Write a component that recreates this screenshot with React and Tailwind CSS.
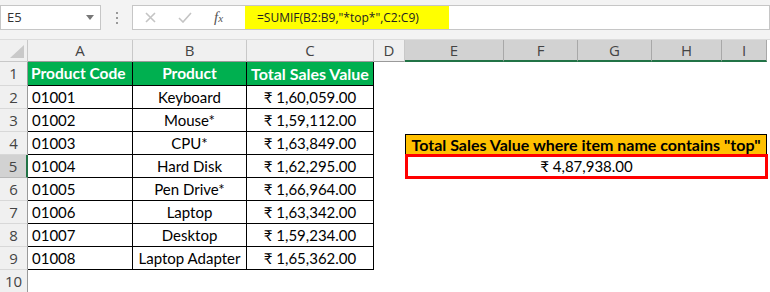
import React from "react";

const cols = [
  { k: "A", w: "w-[105px]" },
  { k: "B", w: "w-[114px]" },
  { k: "C", w: "w-[127px]" },
  { k: "D", w: "w-[31px]" },
  { k: "E", w: "w-[99px]", sel: true },
  { k: "F", w: "w-[74px]", sel: true },
  { k: "G", w: "w-[74px]", sel: true },
  { k: "H", w: "w-[70px]", sel: true },
  { k: "I", w: "w-[45px]", sel: true },
];

const data = [
  ["01001", "Keyboard", "₹ 1,60,059.00"],
  ["01002", "Mouse*", "₹ 1,59,112.00"],
  ["01003", "CPU*", "₹ 1,63,849.00"],
  ["01004", "Hard Disk", "₹ 1,62,295.00"],
  ["01005", "Pen Drive*", "₹ 1,66,964.00"],
  ["01006", "Laptop", "₹ 1,63,342.00"],
  ["01007", "Desktop", "₹ 1,59,234.00"],
  ["01008", "Laptop Adapter", "₹ 1,65,362.00"],
];

const cellFont = { fontFamily: "Lato, 'Open Sans', sans-serif" };
const uiFont = { fontFamily: "'Open Sans', 'Noto Sans', sans-serif" };

function RowHead({ n, sel, h }) {
  return (
    <div
      className={`w-[28px] shrink-0 ${h} flex items-center justify-center text-[15px] text-[#444] border-b ${
        sel
          ? "bg-[#d2d2d2] border-r-2 border-r-[#217346] border-b-[#b8b8b8]"
          : "bg-[#f0f0f0] border-r border-r-[#9a9a9a] border-b-[#d8d8d8]"
      }`}
      style={uiFont}
    >
      {n}
    </div>
  );
}

export default function App() {
  return (
    <div className="w-[770px] h-[292px] bg-white overflow-hidden relative">
      {/* Formula bar */}
      <div className="h-[40px] bg-[#f3f3f3] flex items-start pt-[5px] border-b border-[#dcdcdc]">
        <div className="w-[101px] h-[25px] bg-white border border-[#c6c6c6] flex items-center justify-between pl-[6px] pr-[6px]" style={uiFont}>
          <span className="text-[13px] text-[#333]">E5</span>
          <svg width="8" height="5" viewBox="0 0 8 5"><path d="M0 0 L8 0 L4 5 Z" fill="#777" /></svg>
        </div>
        <div className="w-[31px] h-[25px] flex flex-col items-center justify-center gap-[3px]">
          <span className="w-[2px] h-[2px] bg-[#999]" />
          <span className="w-[2px] h-[2px] bg-[#999]" />
          <span className="w-[2px] h-[2px] bg-[#999]" />
        </div>
        <div className="flex-1 h-[25px] bg-white border border-[#c6c6c6] flex items-center">
          <div className="w-[112px] flex items-center h-full shrink-0">
            <svg className="ml-[12px]" width="11" height="11" viewBox="0 0 11 11"><path d="M1 1 L10 10 M10 1 L1 10" stroke="#c4c4c4" strokeWidth="1.6" /></svg>
            <svg className="ml-[22px]" width="14" height="11" viewBox="0 0 14 11"><path d="M1 6 L5 10 L13 1" stroke="#c4c4c4" strokeWidth="1.6" fill="none" /></svg>
            <span className="ml-[22px] text-[15px] italic text-[#555]" style={{ fontFamily: "'Liberation Serif', serif" }}>
              f<span className="text-[11px]">x</span>
            </span>
          </div>
          <div className="h-full w-[204px] bg-[#ffff00] flex items-center pl-[12px] text-[12px] text-[#222] shrink-0" style={uiFont}>
            =SUMIF(B2:B9,"*top*",C2:C9)
          </div>
        </div>
      </div>

      {/* Column headers */}
      <div className="flex h-[22px]">
        <div className="w-[28px] shrink-0 bg-[#f0f0f0] border-r border-b border-[#c8c8c8] relative">
          <svg className="absolute right-[3px] bottom-[3px]" width="14" height="13" viewBox="0 0 14 13"><path d="M14 0 L14 13 L0 13 Z" fill="#c9c9c9" /></svg>
        </div>
        {cols.map((c) => (
          <div
            key={c.k}
            className={`${c.w} shrink-0 flex items-center justify-center text-[15px] text-[#444] border-r ${
              c.sel
                ? "bg-[#d2d2d2] border-r-[#a8a8a8] border-b-2 border-b-[#217346]"
                : "bg-[#f0f0f0] border-r-[#c8c8c8] border-b border-b-[#9a9a9a]"
            }`}
            style={uiFont}
          >
            {c.k}
          </div>
        ))}
        <div className="flex-1 bg-white" />
      </div>

      {/* Row 1 */}
      <div className="flex h-[24px]" style={cellFont}>
        <RowHead n={1} h="h-[24px]" />
        <div className="w-[105px] shrink-0 bg-[#00b050] border-r border-b border-black flex items-center pl-[3px] text-[15.5px] font-bold text-white whitespace-nowrap">Product Code</div>
        <div className="w-[114px] shrink-0 bg-[#00b050] border-r border-b border-black flex items-center justify-center text-[15.5px] font-bold text-white">Product</div>
        <div className="w-[127px] shrink-0 bg-[#00b050] border-r border-b border-black flex items-center justify-center text-[16px] font-bold text-white whitespace-nowrap">Total Sales Value</div>
      </div>

      {data.map((r, i) => {
        const n = i + 2;
        return (
          <div key={n} className="flex h-[23px]" style={cellFont}>
            <RowHead n={n} sel={n === 5} h="h-[23px]" />
            <div className="w-[105px] shrink-0 border-r border-b border-black flex items-center pl-[4px] text-[15px] text-black">{r[0]}</div>
            <div className="w-[114px] shrink-0 border-r border-b border-black flex items-center justify-center text-[15px] text-black whitespace-nowrap">{r[1]}</div>
            <div className="w-[127px] shrink-0 border-r border-b border-black flex items-center justify-center text-[15px] text-black">{r[2]}</div>
            <div className="w-[31px] shrink-0" />
            {n === 4 && (
              <div className="w-[362px] shrink-0 h-[21px] self-end bg-[#ffc000] border border-black border-b-0 flex items-center justify-center text-[16px] font-bold text-black whitespace-nowrap">
                Total Sales Value where item name contains "top"
              </div>
            )}
            {n === 5 && (
              <div className="w-[363px] shrink-0 h-[25px] -mt-px bg-white border-[3px] border-[#ff0000] flex items-center justify-center text-[15px] text-black relative z-10">
                ₹ 4,87,938.00
              </div>
            )}
          </div>
        );
      })}

      <div className="flex h-[23px]">
        <RowHead n={10} h="h-[23px]" />
      </div>
    </div>
  );
}
